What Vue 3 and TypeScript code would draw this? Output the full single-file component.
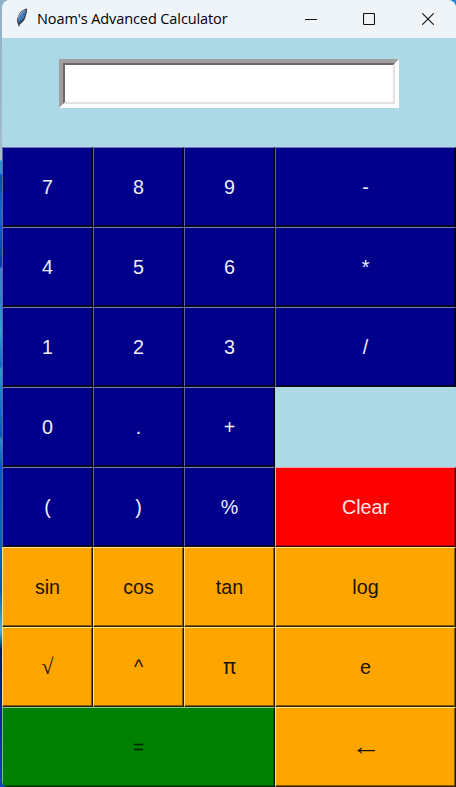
<script setup lang="ts">
import { ref } from 'vue'

type Tone = 'navy' | 'red' | 'orange' | 'green'
interface Key {
  label: string
  tone: Tone
  kind?: string
}

const row = (labels: string[], tone: Tone): Key[] => labels.map((label) => ({ label, tone }))

const keys: Key[] = [
  ...row(['7', '8', '9', '-', '4', '5', '6', '*', '1', '2', '3', '/', '0', '.', '+'], 'navy'),
  { label: '', tone: 'navy', kind: 'blank' },
  ...row(['(', ')', '%'], 'navy'),
  { label: 'Clear', tone: 'red' },
  ...row(['sin', 'cos', 'tan', 'log'], 'orange'),
  { label: '√', tone: 'orange', kind: 'root' },
  { label: '^', tone: 'orange' },
  { label: 'π', tone: 'orange', kind: 'pi' },
  { label: 'e', tone: 'orange' },
  { label: '=', tone: 'green', kind: 'wide' },
  { label: '←', tone: 'orange', kind: 'arrow' },
]

const expression = ref('')

function press(label: string) {
  if (label === 'Clear') expression.value = ''
  else if (label === '←') expression.value = expression.value.slice(0, -1)
  else if (label !== '=') expression.value += label
}
</script>

<template>
  <div class="desktop">
    <div class="window">
      <header class="titlebar">
        <svg class="feather" width="12" height="20" viewBox="0 0 12 20">
          <path d="M11 .5C7 1 3 4.500 1.500 9.500c-.7 2.500-.7 5 .7 7L3 19l.8-2.500C7 14.500 9 11.500 9.500 9c1-3 1.900-5.500 1.500-8.500z" fill="#39424c" />
          <path d="M10 2C6.500 3.500 3.500 7 2.500 11l-.2 3.500C5.500 13 7.700 10 8.600 7.500z" fill="#4688d6" />
          <path d="M10 1.700C5.700 4 2.700 8 2 12L1.700 10C3.500 5 6.500 2 10 1.700z" fill="#b2bec8" />
          <path d="M8.500 5C6 8.500 4 12.500 3 18" fill="none" stroke="#244a7c" stroke-width=".6" />
        </svg>
        <span class="title">Noam's Advanced Calculator</span>
        <div class="controls">
          <svg width="12" height="12" viewBox="0 0 12 12"><path d="M0 6.500h12" /></svg>
          <svg width="12" height="12" viewBox="0 0 12 12"><rect x=".5" y=".5" width="11" height="11" rx="1" /></svg>
          <svg width="12" height="12" viewBox="0 0 12 12"><path d="M.3.3l11.400 11.400M11.700.3L.3 11.700" /></svg>
        </div>
      </header>
      <div class="display">
        <div class="entry"><div class="field">{{ expression }}</div></div>
      </div>
      <main class="pad">
        <template v-for="(key, i) in keys" :key="i">
          <div v-if="key.kind === 'blank'"></div>
          <button v-else type="button" :class="['key', key.tone, key.kind]" @click="press(key.label)">
            <span>{{ key.label }}</span>
          </button>
        </template>
      </main>
    </div>
  </div>
</template>

<style>
html,
body {
  margin: 0;
  overflow: hidden;
}
</style>

<style scoped>
.desktop {
  box-sizing: border-box;
  width: 456px;
  height: 787px;
  padding-left: 2px;
  background:
    linear-gradient(to bottom left, #2684dc 6px, transparent 7px),
    linear-gradient(#8fb1ca 0, #a3bccb 160px, #3091d2 161px, #2f8fd4 173px, #0747ca 175px, #1763da 212px, #0637bd 266px, #4580cf 269px, #3181cb 300px, #32a3d2 330px, #1867cd 366px, #2d98cc 369px, #0752d0 436px, #2d8dcc 440px, #0757d0 465px, #0760cb 530px, #0b55c1 590px, #45b4df 630px, #0754a7 643px, #00127a 650px, #0927a3 720px, #0c45bd 787px);
}
.window {
  height: 787px;
  overflow: hidden;
  border-radius: 8px 8px 0 6px;
  background: #add8e6;
}
.titlebar {
  box-sizing: border-box;
  display: flex;
  align-items: center;
  height: 38px;
  padding: 0 22px 0 14px;
  background: #eff4f9;
}
.feather {
  margin-top: -3px;
}
.title {
  margin-left: 9px;
  font: 14.5px/20px 'Open Sans', 'Noto Sans', sans-serif;
  letter-spacing: -0.1px;
  white-space: nowrap;
  color: #000;
}
.controls {
  display: flex;
  gap: 47px;
  margin-left: auto;
}
.controls svg {
  fill: none;
  stroke: #111;
  stroke-width: 1.1;
}
.controls svg:first-child {
  margin-right: -1px;
}
.display {
  box-sizing: border-box;
  height: 109px;
  padding: 21px 57px 0;
}
.entry {
  box-sizing: border-box;
  width: 340px;
  height: 49px;
  border: 4px solid;
  border-color: #a0a0a0 #fff #fff #a0a0a0;
}
.field {
  box-sizing: border-box;
  height: 41px;
  border: 2px solid;
  border-color: #696969 #e3e3e3 #e3e3e3 #696969;
  background: #fff;
  color: #000;
  font: 24px/36px 'Liberation Sans', sans-serif;
  text-align: right;
  overflow: hidden;
}
.pad {
  display: grid;
  grid-template-columns: repeat(3, 91px) 181px;
  grid-template-rows: repeat(8, 80px);
}
.key {
  display: flex;
  align-items: center;
  justify-content: center;
  margin: 0;
  padding: 0;
  border: 1px solid;
  border-radius: 0;
  font: 19.7px/24px 'Liberation Sans', sans-serif;
}
.navy {
  background: #00008b;
  border-color: #7878b8 #000006 #101016 #6464a4;
  box-shadow: inset -1px -1px 0 #000030;
  color: #eeeef8;
}
.red {
  background: #f00;
  border-color: #efa0a9 #400 #300 #f5a6a6;
  box-shadow: inset -1px -1px 0 #b00000;
  color: #ffe9e9;
}
.orange {
  background: #ffa500;
  border-color: #ffe392 #1b1303 #2d2205 #ffe08e;
  box-shadow: inset -1px -1px 0 #8a5a00;
  color: #1c1200;
}
.green {
  background: #008000;
  border-color: #90c990 #001a00 #002e00 #80bc80;
  box-shadow: inset -1px -1px 0 #005400;
  color: #002000;
}
.wide {
  grid-column: span 3;
}
.root span {
  font: 22px/24px 'Liberation Serif', serif;
}
.pi span {
  font: 21px/24px Inter, 'Liberation Sans', sans-serif;
}
.arrow span {
  font: 20px/24px 'Liberation Serif', serif;
  transform: translateY(-1px) scale(1.5, 1.25);
}
</style>
